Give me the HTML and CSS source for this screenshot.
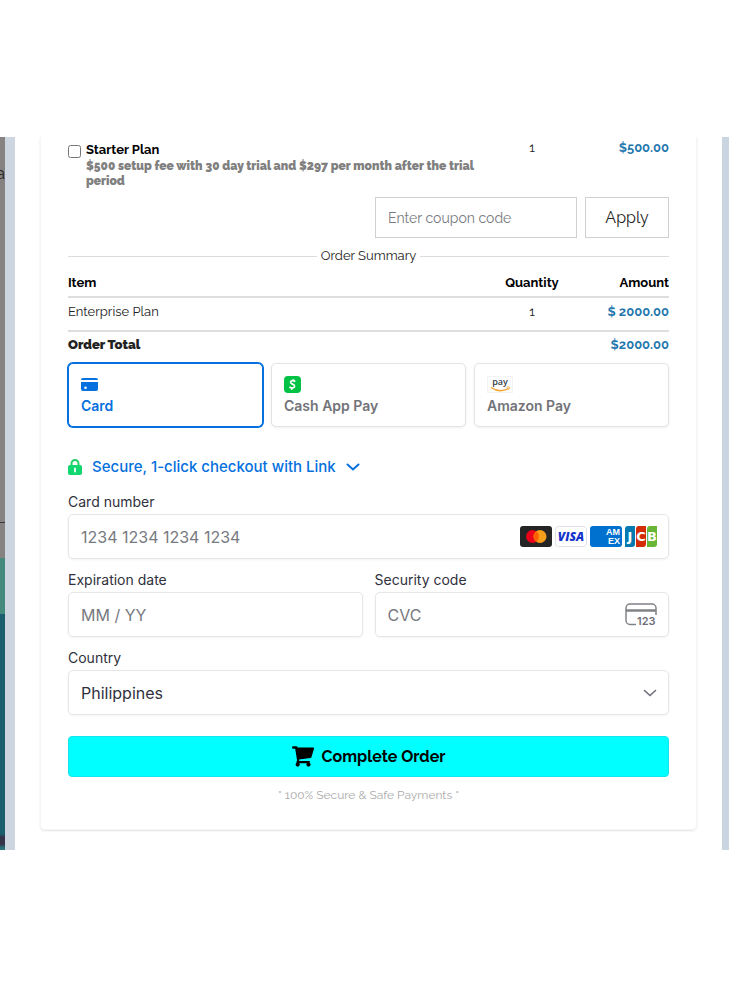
FILE: index.html
```html
<!DOCTYPE html>
<html lang="en">
<head>
<meta charset="utf-8">
<meta name="viewport" content="width=device-width, initial-scale=1">
<title>Checkout</title>
<link rel="stylesheet" href="styles.css">
</head>
<body>
<div class="stage">
  <div class="backdrop"><span>a</span></div>
  <main class="panel">
    <form class="checkout">
      <div class="offer">
        <input type="checkbox" id="starter">
        <div>
          <label class="offer-name" for="starter">Starter Plan</label>
          <p class="offer-text">$500 setup fee with 30 day trial and $297 per month after the trial period</p>
        </div>
        <span class="offer-qty">1</span>
        <span class="offer-price">$500.00</span>
      </div>
      <div class="coupon">
        <input type="text" aria-label="Coupon code" placeholder="Enter coupon code">
        <button type="button">Apply</button>
      </div>
      <h2 class="divider">Order Summary</h2>
      <table class="summary">
        <thead><tr><th>Item</th><th class="qty">Quantity</th><th class="amount">Amount</th></tr></thead>
        <tbody><tr><td>Enterprise Plan</td><td class="qty">1</td><td class="amount price">$ 2000.00</td></tr></tbody>
        <tfoot><tr><td>Order Total</td><td class="qty"></td><td class="amount price">$2000.00</td></tr></tfoot>
      </table>
      <div class="methods">
        <button type="button" class="method selected">
          <svg width="17" height="17" viewBox="0 0 17 17" fill="currentColor"><path d="M2 2h13a2 2 0 0 1 2 2H0a2 2 0 0 1 2-2z"/><path fill-rule="evenodd" d="M0 6h17v7a2 2 0 0 1-2 2H2a2 2 0 0 1-2-2zm4.500 4.500a1.300 1.300 0 1 0 0 2.600 1.300 1.300 0 0 0 0-2.600z"/></svg>
          <span>Card</span>
        </button>
        <button type="button" class="method">
          <svg width="17" height="17" viewBox="0 0 17 17"><rect width="17" height="17" rx="4" fill="#00c244"/><path d="M11.200 5.700C9.600 4.200 6.800 4.400 6.500 6.200c-.3 2.200 4.300 1.700 4.100 4-.2 2-3.300 2.400-5.100.7M9.600 3.200l-.5 1.500M7.900 12.200l-.4 1.600" fill="none" stroke="#fff" stroke-width="1.700"/></svg>
          <span>Cash App Pay</span>
        </button>
        <button type="button" class="method">
          <svg class="amazon" width="26" height="17" viewBox="0 0 26 17"><rect x=".5" y=".5" width="25" height="16" fill="#fff" stroke="#f3f3f3"/><text x="13" y="9" text-anchor="middle" class="pay-text">pay</text><path d="M4 11.500c5.500 3.800 12 4 17.500 1" fill="none" stroke="#f7a12b" stroke-width="1.400"/><path d="M19.500 11.300c1.500-.5 2.800-.5 3 0s-.3 1.700-1 2.500" fill="none" stroke="#f7a12b"/></svg>
          <span>Amazon Pay</span>
        </button>
      </div>
      <button type="button" class="link-toggle">
        <svg width="14" height="16" viewBox="0 0 14 16"><path d="M3.500 7V4.500a3.500 3.500 0 0 1 7 0V7" fill="none" stroke="#24d069" stroke-width="2"/><rect x="0" y="6" width="14" height="10" rx="2" fill="#12d66f"/><path d="M7 9.500v3" stroke="#e3fff0" stroke-width="2" stroke-linecap="round"/></svg>
        <span>Secure, 1-click checkout with Link</span>
        <svg width="14" height="8" viewBox="0 0 14 8"><path d="M1.500 1.500 7 6.500l5.500-5" fill="none" stroke="currentColor" stroke-width="2" stroke-linecap="round"/></svg>
      </button>
      <div class="fields">
        <div class="field wide">
          <label for="number">Card number</label>
          <div class="box">
            <input id="number" type="text" placeholder="1234 1234 1234 1234">
            <span class="brands">
              <svg width="32" height="21" viewBox="0 0 32 21"><rect width="32" height="21" rx="3" fill="#252525"/><circle cx="12.500" cy="10.500" r="6.500" fill="#eb001b"/><circle cx="20" cy="10.500" r="6.500" fill="#f79e1b"/><path d="M16.200 5.200a6.500 6.500 0 0 1 0 10.600 6.500 6.500 0 0 1 0-10.600z" fill="#ff5f00"/></svg>
              <svg width="32" height="21" viewBox="0 0 32 21"><rect x=".5" y=".5" width="31" height="20" rx="3" fill="#fff" stroke="#e0e0ea"/><text x="16" y="15" text-anchor="middle" class="visa-text">VISA</text></svg>
              <svg width="32" height="21" viewBox="0 0 32 21"><rect width="32" height="21" rx="3" fill="#0071ce"/><text x="16" y="9" class="amex-text">AM</text><text x="18" y="18" class="amex-text">EX</text></svg>
              <svg width="32" height="21" viewBox="0 0 32 21"><path d="M3 0h7v18a3 3 0 0 1-3 3H0V3a3 3 0 0 1 3-3z" fill="#047ab1"/><path d="M14 0h7v18a3 3 0 0 1-3 3h-7V3a3 3 0 0 1 3-3z" fill="#d42d06"/><path d="M25 0h7v18a3 3 0 0 1-3 3h-7V3a3 3 0 0 1 3-3z" fill="#67b637"/><text x="5" y="15" text-anchor="middle" class="jcb-text">J</text><text x="16" y="15" text-anchor="middle" class="jcb-text">C</text><text x="27" y="15" text-anchor="middle" class="jcb-text">B</text></svg>
            </span>
          </div>
        </div>
        <div class="field">
          <label for="expiry">Expiration date</label>
          <div class="box"><input id="expiry" type="text" placeholder="MM / YY"></div>
        </div>
        <div class="field">
          <label for="cvc">Security code</label>
          <div class="box">
            <input id="cvc" type="text" placeholder="CVC">
            <svg width="32" height="24" viewBox="0 0 32 24"><path d="M11 21.500H5a4 4 0 0 1-4-4V5a4 4 0 0 1 4-4h22a4 4 0 0 1 4 4v7" fill="none" stroke="#808386" stroke-width="1.500"/><path d="M1 7.500h30" stroke="#808386" stroke-width="2.500"/><text x="12" y="22" class="cvc-text">123</text></svg>
          </div>
        </div>
        <div class="field wide">
          <label for="country">Country</label>
          <div class="box">
            <select id="country"><option>Philippines</option></select>
            <svg width="14" height="8" viewBox="0 0 14 8"><path d="M1.500 1.500 7 6.500l5.500-5" fill="none" stroke="#6d6e78" stroke-width="1.600" stroke-linecap="round"/></svg>
          </div>
        </div>
      </div>
      <button type="submit" class="submit">
        <svg width="22" height="21" viewBox="0 0 22 21"><path d="M0 1.500A1.200 1.200 0 0 1 1.200.3h3.300c.6 0 .9.300 1 1.200H21a1 1 0 0 1 1 1.300l-2.600 8.400a1.200 1.200 0 0 1-1 .9L7 13.400l.3 1.700h10.500v2.200H5.500a1 1 0 0 1-1-1.500l.6-1.200L3.200 2.700h-2A1.200 1.200 0 0 1 0 1.500z"/><circle cx="5.700" cy="18.600" r="2.100"/><circle cx="16.500" cy="18.600" r="2.100"/></svg>
        <span>Complete Order</span>
      </button>
      <p class="note">* 100% Secure &amp; Safe Payments *</p>
    </form>
  </main>
</div>
</body>
</html>
```

FILE: styles.css
```css
* { box-sizing: border-box; }

body {
  margin: 0;
  background: #fff;
  color: #222;
  font: 13px/18px Raleway, Lato, sans-serif;
}

button, input, select { font: inherit; color: inherit; }
button { cursor: pointer; }
svg { display: block; flex: none; }
p, h2 { margin: 0; }

.stage { display: flex; margin-top: 137px; }

.backdrop {
  flex: none;
  width: 5px;
  padding-top: 28px;
  overflow: hidden;
  color: #222;
  font-size: 16px;
  background: linear-gradient(#858281 385px, #333c3c 385px 386px, #858281 386px 421px, #43897c 421px 477px, #1b5e6c 477px 697px, #343349 700px 707px, #28737a 711px);
}
.backdrop span { display: flex; justify-content: flex-end; }

.panel {
  flex: 1;
  min-width: 0;
  padding: 0 25px 20px;
  border-left: 10px solid #cdd5e1;
  border-right: 7px solid #cad5e2;
}

.checkout {
  padding: 4px 27px 24px;
  border: 1px solid #f5f5f5;
  border-width: 0 1px 1px;
  border-radius: 0 0 5px 5px;
  box-shadow: 0 1px 2px #e2e2e2;
}

.offer { display: grid; grid-template-columns: 18px 1fr 94px 90px; }
.offer input { width: 13px; height: 13px; margin: 4px 0 0; }
.offer-name { display: block; color: #000; font-weight: 700; }
.offer-text { color: #808080; font-size: 12px; line-height: 15px; font-weight: 900; }
.offer-qty { text-align: center; line-height: 14px; }
.offer-price { text-align: right; line-height: 14px; color: #1f77ad; font-weight: 700; }

.coupon { display: flex; justify-content: flex-end; gap: 8px; margin-top: 8px; }
.coupon input, .coupon button {
  height: 41px;
  border: 1px solid #d0d0d0;
  background: #fff;
  border-radius: 0;
}
.coupon input { width: 202px; padding: 0 12px; font-size: 14px; }
.coupon button { width: 84px; padding: 0; font-size: 16px; }
::placeholder { color: #777a80; opacity: 1; }

.divider {
  display: flex;
  align-items: center;
  gap: 4px;
  margin-top: 8px;
  font-size: 13px;
  line-height: 20px;
  font-weight: 400;
}
.divider::before, .divider::after { content: ""; flex: 1; height: 1px; background: #dcdcdc; }

.summary { width: 100%; border-collapse: separate; border-spacing: 0; table-layout: fixed; }
.summary th { padding: 8px 0 4px; border-bottom: 2px solid #dedede; text-align: left; color: #000; }
.summary td { padding: 5px 0 9px; border-bottom: 2px solid #dedede; }
.summary tfoot td { padding: 4px 0 0; border: 0; font-weight: 900; }
.summary .qty { width: 94px; text-align: center; }
.summary .amount { width: 90px; text-align: right; }
.summary td.price { color: #1f77ad; font-weight: 700; }

.methods, .link-toggle, .fields { font-family: Inter, sans-serif; }
.methods { display: grid; grid-template-columns: repeat(3, 1fr); gap: 8px; margin-top: 9px; }
.method {
  height: 64px;
  display: flex;
  flex-direction: column;
  align-items: flex-start;
  justify-content: center;
  gap: 2px;
  padding: 2px 12px 0;
  border: 1px solid #e2e3e5;
  border-radius: 5px;
  background: #fff;
  box-shadow: 0 1px 3px #00000010;
  color: #727378;
  font-size: 14px;
  line-height: 22px;
  font-weight: 600;
}
.selected { border-color: #0570de; box-shadow: 0 0 0 1px #0570de; color: #0570de; }
.amazon { overflow: visible; }
.pay-text { font: 600 9px "Open Sans", sans-serif; fill: #333e48; }

.link-toggle {
  display: flex;
  align-items: center;
  gap: 10px;
  margin-top: 30px;
  padding: 0;
  border: 0;
  background: none;
  color: #0570de;
  font-size: 15px;
  line-height: 20px;
  font-weight: 500;
}

.fields {
  display: grid;
  grid-template-columns: repeat(2, minmax(0, 1fr));
  gap: 11px 12px;
  margin-top: 15px;
  color: #30313d;
}
.wide { grid-column: 1 / -1; }
.field label { display: block; margin-bottom: 2px; font-size: 14px; line-height: 20px; }
.box {
  display: flex;
  align-items: center;
  height: 45px;
  padding: 0 11px 0 12px;
  border: 1px solid #e6e6e6;
  border-radius: 5px;
  box-shadow: 0 1px 3px #0000000d;
  font-size: 16px;
}
.box input, .box select {
  flex: 1;
  min-width: 0;
  height: 43px;
  padding: 0;
  border: 0;
  outline: 0;
  background: none;
  appearance: none;
}
.brands { display: flex; gap: 3px; }
.visa-text { font: italic 800 12px "Open Sans", sans-serif; fill: #1434cb; }
.amex-text { font: 700 9px "Liberation Sans", sans-serif; fill: #fff; }
.jcb-text { font: 700 13px "DejaVu Sans", sans-serif; fill: #fff; }
.cvc-text { font: 600 11px Inter, sans-serif; fill: #6d6e78; }

.submit {
  display: flex;
  align-items: center;
  justify-content: center;
  gap: 8px;
  width: 100%;
  height: 41px;
  margin-top: 21px;
  border: 1px solid #12e6ec;
  border-radius: 4px;
  background: #0ff;
  color: #000;
  font-size: 16px;
  font-weight: 700;
}
.note { margin-top: 8px; text-align: center; color: #aaa; font-size: 12px; line-height: 20px; }
```
